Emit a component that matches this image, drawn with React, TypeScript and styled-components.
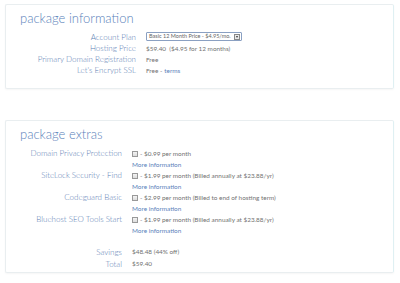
import React from "react";
import styled, { createGlobalStyle } from "styled-components";

const GlobalStyle = createGlobalStyle`
  html, body {
    margin: 0;
    padding: 0;
    background: #ffffff;
  }
  body {
    font-family: Lato, "Open Sans", sans-serif;
    color: #5e5e5e;
  }
`;

const Page = styled.div`
  width: 400px;
  height: 283px;
  padding: 4px 6px 0 5px;
  box-sizing: border-box;
  display: flex;
  flex-direction: column;
  gap: 31px;
`;

const Card = styled.section<{ $height: number }>`
  height: ${p => p.$height}px;
  box-sizing: border-box;
  border: 1px solid #e9eef0;
  border-right-color: #dff0f3;
  border-radius: 2px;
  box-shadow: 0 1px 2px rgba(0, 0, 0, 0.04);
  padding: 5px 0 0 14px;
`;

const Title = styled.h2`
  margin: 0 0 6px 0;
  font-size: 13px;
  font-weight: 300;
  color: #5a7fba;
  line-height: 16px;
`;

const Grid = styled.div<{ $labelWidth: number }>`
  display: grid;
  grid-template-columns: ${p => p.$labelWidth}px 1fr;
  column-gap: 10px;
  align-items: start;
`;

const Label = styled.div<{ $h?: number }>`
  text-align: right;
  font-size: 8px;
  font-weight: 300;
  color: #5b7db3;
  line-height: ${p => p.$h || 11}px;
  white-space: nowrap;
`;

const Value = styled.div<{ $h?: number }>`
  font-size: 6.4px;
  color: #727272;
  line-height: ${p => p.$h || 11}px;
  white-space: nowrap;
  display: flex;
  align-items: center;
`;

const Select = styled.div`
  width: 96px;
  height: 9px;
  box-sizing: border-box;
  border: 1px solid #8aa0c2;
  border-radius: 1px;
  display: flex;
  align-items: center;
  justify-content: space-between;
  padding-left: 2px;
  font-size: 5.5px;
  color: #666;
  background: #fff;
  line-height: 7px;
  overflow: hidden;
`;

const Arrow = styled.span`
  width: 6px;
  height: 6px;
  margin-right: 1px;
  border: 1px solid #888;
  box-sizing: border-box;
  background: #e8e8e8;
  flex: none;
  display: flex;
  align-items: center;
  justify-content: center;
  &::after {
    content: "";
    border-left: 1.5px solid transparent;
    border-right: 1.5px solid transparent;
    border-top: 2px solid #333;
  }
`;

const Link = styled.span`
  color: #5a7fba;
  margin-left: 2px;
`;

const Checkbox = styled.span`
  width: 6px;
  height: 6px;
  border: 1px solid #999;
  box-sizing: border-box;
  background: linear-gradient(#f4f4f4, #dcdcdc);
  margin-right: 2px;
  flex: none;
`;

const ExtraValue = styled.div`
  display: flex;
  flex-direction: column;
`;

const More = styled.div`
  font-size: 6.4px;
  color: #5a7fba;
  line-height: 11px;
`;

const Totals = styled(Grid)`
  margin-top: 10px;
`;

const extras = [
  { name: "Domain Privacy Protection", price: "- $0.99 per month" },
  { name: "SiteLock Security - Find", price: "- $1.99 per month (Billed annually at $23.88/yr)" },
  { name: "Codeguard Basic", price: "- $2.99 per month (Billed to end of hosting term)" },
  { name: "Bluehost SEO Tools Start", price: "- $1.99 per month (Billed annually at $23.88/yr)" },
];

export default function App() {
  return (
    <>
      <GlobalStyle />
      <Page>
        <Card $height={85}>
          <Title>package information</Title>
          <Grid $labelWidth={116}>
            <Label>Account Plan</Label>
            <Value>
              <Select>
                Basic 12 Month Price - $4.95/mo.
                <Arrow />
              </Select>
            </Value>
            <Label>Hosting Price</Label>
            <Value>$59.40&nbsp; ($4.95 for 12 months)</Value>
            <Label>Primary Domain Registration</Label>
            <Value>Free</Value>
            <Label>Let's Encrypt SSL</Label>
            <Value>
              Free -<Link>terms</Link>
            </Value>
          </Grid>
        </Card>
        <Card $height={153}>
          <Title>package extras</Title>
          <Grid $labelWidth={102}>
            {extras.map(e => (
              <React.Fragment key={e.name}>
                <Label>{e.name}</Label>
                <ExtraValue>
                  <Value>
                    <Checkbox />
                    {e.price}
                  </Value>
                  <More>More information</More>
                </ExtraValue>
              </React.Fragment>
            ))}
          </Grid>
          <Totals $labelWidth={102}>
            <Label $h={12}>Savings</Label>
            <Value $h={12}>$48.48 (44% off)</Value>
            <Label $h={12}>Total</Label>
            <Value $h={12}>$59.40</Value>
          </Totals>
        </Card>
      </Page>
    </>
  );
}
